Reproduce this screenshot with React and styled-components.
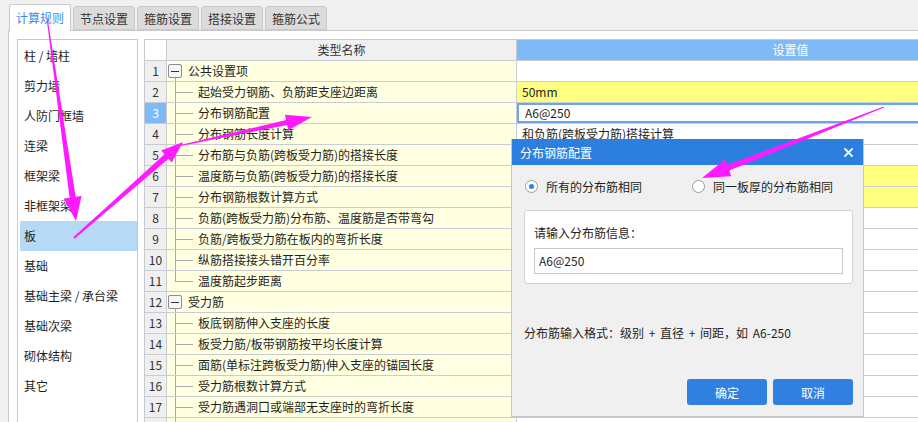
import React from 'react';
import styled, { createGlobalStyle } from 'styled-components';

const GlobalStyle = createGlobalStyle`
  html, body {
    margin: 0;
    padding: 0;
    background: #f0f0f0;
  }
  body {
    font-family: "Noto Sans CJK SC", "Microsoft YaHei", sans-serif;
    font-size: 12px;
    color: #1e1e1e;
  }
`;

const Page = styled.div`
  position: relative;
  width: 918px;
  height: 422px;
  overflow: hidden;
  background: #f0f0f0;
`;

const TabBar = styled.div`
  display: flex;
  align-items: flex-end;
  gap: 2px;
  height: 30px;
  padding-left: 9px;
`;

const Tab = styled.div`
  position: relative;
  z-index: 1;
  box-sizing: border-box;
  height: ${p => (p.$active ? '27px' : '24px')};
  margin-bottom: ${p => (p.$active ? '-1px' : '0')};
  padding: 0 6px;
  line-height: ${p => (p.$active ? '25px' : '23px')};
  border: 1px solid #cacaca;
  border-bottom: ${p => (p.$active ? 'none' : '1px solid #cacaca')};
  border-radius: 3px 3px 0 0;
  background: ${p => (p.$active ? '#fff' : '#dcdcdc')};
  color: ${p => (p.$active ? '#3b8de6' : '#333')};
  font-size: 12px;
  white-space: nowrap;
`;

const Panel = styled.div`
  display: flex;
  align-items: stretch;
  gap: 6px;
  height: 392px;
  margin-left: 8px;
  padding: 8px 0 0 8px;
  border-top: 1px solid #cacaca;
  border-left: 1px solid #cacaca;
  background: #fff;
`;

const SideList = styled.div`
  flex: none;
  box-sizing: border-box;
  width: 121px;
  padding-top: 1px;
  border: 1px solid #c8c8c8;
  background: #fff;
`;

const SideItem = styled.div`
  height: 30px;
  line-height: 30px;
  margin-left: 2px;
  padding-left: 4px;
  background: ${p => (p.$selected ? '#b6d9f5' : 'transparent')};
  color: #1e1e1e;
  white-space: nowrap;
`;

const Table = styled.div`
  flex: none;
  display: grid;
  grid-template-columns: 22px 350px 548px;
  grid-auto-rows: 21px;
  align-content: start;
  border-top: 1px solid #c6c9cf;
  border-left: 1px solid #c6c9cf;
`;

const Cell = styled.div`
  box-sizing: border-box;
  height: 21px;
  line-height: 20px;
  border-right: 1px solid #c9ccd2;
  border-bottom: 1px solid #c9ccd2;
  white-space: nowrap;
  overflow: hidden;
`;

const CornerCell = styled(Cell)`
  background: #fff;
`;

const HeadCell = styled(Cell)`
  text-align: center;
  background: ${p => (p.$accent ? '#7fbaf6' : '#f0f0f0')};
  color: ${p => (p.$accent ? '#fff' : '#333')};
`;

const NumCell = styled(Cell)`
  text-align: center;
  background: ${p => (p.$active ? '#7fbaf6' : '#efefef')};
  color: ${p => (p.$active ? '#fff' : '#333')};
`;

const NameCell = styled(Cell)`
  display: flex;
  align-items: stretch;
  background: #ffffe1;
`;

const ValueCell = styled(Cell)`
  padding-left: ${p => (p.$editing ? '8px' : '5px')};
  background: ${p => (p.$yellow ? '#ffff80' : '#fff')};
  box-shadow: ${p => (p.$editing ? 'inset 0 2px 0 #6aa6ea, inset 0 -2px 0 #6aa6ea, inset 2px 0 0 #6aa6ea' : 'none')};
`;

const Guide = styled.span`
  position: relative;
  flex: none;
  display: flex;
  align-items: center;
  width: ${p => (p.$group ? '21px' : '26px')};
  padding-left: ${p => (p.$group ? '1px' : '0')};
  box-sizing: border-box;

  &::before {
    content: '';
    position: absolute;
    left: 8px;
    top: ${p => (p.$group ? '17px' : '0')};
    bottom: ${p => (p.$last ? '10px' : '-1px')};
    border-left: 1px solid #a9a9a9;
  }

  &::after {
    content: '';
    display: ${p => (p.$group ? 'none' : 'block')};
    position: absolute;
    left: 8px;
    top: 10px;
    width: 18px;
    border-top: 1px solid #a9a9a9;
  }
`;

const Toggle = styled.span`
  box-sizing: border-box;
  width: 14px;
  height: 14px;
  display: flex;
  align-items: center;
  justify-content: center;
  border: 1px solid #8c8c8c;
  border-radius: 2px;
  background: #f7f7f7;

  &::after {
    content: '';
    width: 8px;
    height: 1px;
    background: #333;
  }
`;

const NameText = styled.span`
  padding-left: ${p => (p.$group ? '0' : '5px')};
`;

const Dialog = styled.div`
  position: absolute;
  left: 511px;
  top: 139px;
  z-index: 2;
  box-sizing: border-box;
  width: 353px;
  height: 278px;
  display: flex;
  flex-direction: column;
  border: 1px solid #c2c6cf;
  border-top: none;
  background: #f0f0f0;
`;

const TitleBar = styled.div`
  display: flex;
  align-items: center;
  justify-content: space-between;
  height: 26px;
  padding: 0 10px 0 8px;
  background: #2c7fdf;
  color: #fff;
`;

const DialogBody = styled.div`
  display: flex;
  flex-direction: column;
  padding: 0 10px 0 12px;
`;

const RadioRow = styled.div`
  display: flex;
  align-items: center;
  gap: 50px;
  height: 20px;
  margin-top: 11px;
  padding-left: 1px;
`;

const RadioOption = styled.label`
  display: flex;
  align-items: center;
  gap: 8px;
  white-space: nowrap;
`;

const Radio = styled.span`
  box-sizing: border-box;
  width: 13px;
  height: 13px;
  display: flex;
  align-items: center;
  justify-content: center;
  border: 1px solid #9b9b9b;
  border-radius: 50%;
  background: #fff;

  &::after {
    content: '';
    width: 5px;
    height: 5px;
    border-radius: 50%;
    background: ${p => (p.$checked ? '#2f80e0' : 'transparent')};
  }
`;

const GroupBox = styled.div`
  box-sizing: border-box;
  height: 74px;
  margin-top: 14px;
  padding: 13px 9px 0 9px;
  border: 1px solid #cfd2d8;
  border-radius: 3px;
  background: #fff;
`;

const FieldLabel = styled.div`
  line-height: 17px;
`;

const Field = styled.div`
  box-sizing: border-box;
  height: 26px;
  margin-top: 7px;
  padding-left: 4px;
  line-height: 24px;
  border: 1px solid #c8c8c8;
  background: #fff;
`;

const Hint = styled.div`
  margin-top: 40px;
  line-height: 17px;
  word-spacing: 2px;
  white-space: nowrap;
`;

const ButtonRow = styled.div`
  display: flex;
  justify-content: flex-end;
  gap: 6px;
  margin-top: 38px;
`;

const Button = styled.button`
  width: 80px;
  height: 26px;
  padding: 0;
  border: none;
  border-radius: 3px;
  background: #2f80e0;
  color: #fff;
  font-family: inherit;
  font-size: 12px;
`;

const Overlay = styled.svg`
  position: absolute;
  left: 0;
  top: 0;
  z-index: 3;
  pointer-events: none;
`;

const tabs = ['计算规则', '节点设置', '箍筋设置', '搭接设置', '箍筋公式'];

const sideItems = [
  '柱 / 墙柱', '剪力墙', '人防门框墙', '连梁', '框架梁', '非框架梁', '板',
  '基础', '基础主梁 / 承台梁', '基础次梁', '砌体结构', '其它',
];

// values for rows 5+ sit under the dialog, so they are left blank
const rows = [
  { label: '公共设置项', group: true },
  { label: '起始受力钢筋、负筋距支座边距离', value: '50mm', yellow: true },
  { label: '分布钢筋配置', value: 'A6@250', editing: true },
  { label: '分布钢筋长度计算', value: '和负筋(跨板受力筋)搭接计算' },
  { label: '分布筋与负筋(跨板受力筋)的搭接长度' },
  { label: '温度筋与负筋(跨板受力筋)的搭接长度', yellow: true },
  { label: '分布钢筋根数计算方式', yellow: true },
  { label: '负筋(跨板受力筋)分布筋、温度筋是否带弯勾' },
  { label: '负筋/跨板受力筋在板内的弯折长度' },
  { label: '纵筋搭接接头错开百分率' },
  { label: '温度筋起步距离', last: true },
  { label: '受力筋', group: true },
  { label: '板底钢筋伸入支座的长度' },
  { label: '板受力筋/板带钢筋按平均长度计算' },
  { label: '面筋(单标注跨板受力筋)伸入支座的锚固长度' },
  { label: '受力筋根数计算方式' },
  { label: '受力筋遇洞口或端部无支座时的弯折长度' },
  { label: '' },
];

function arrowPoints([x1, y1], [x2, y2], w1, w2, hl, hw) {
  const dx = x2 - x1;
  const dy = y2 - y1;
  const len = Math.hypot(dx, dy);
  const ux = dx / len;
  const uy = dy / len;
  const nx = -uy;
  const ny = ux;
  const bx = x2 - ux * hl;
  const by = y2 - uy * hl;
  const p = (x, y, k) => `${(x + nx * k).toFixed(1)},${(y + ny * k).toFixed(1)}`;
  return [
    p(x1, y1, w1 / 2), p(bx, by, w2 / 2), p(bx, by, hw / 2), `${x2},${y2}`,
    p(bx, by, -hw / 2), p(bx, by, -w2 / 2), p(x1, y1, -w1 / 2),
  ].join(' ');
}

const arrows = [
  [[47, 18], [76, 221], 1, 6, 24, 18],
  [[74, 238], [183, 142], 2, 6, 22, 16],
  [[178, 146], [312, 117], 1, 5, 26, 16],
  [[884, 107], [702, 178], 1, 6, 28, 18],
];

function CloseIcon() {
  return (
    <svg width="9" height="9" viewBox="0 0 9 9">
      <path d="M1 1 L8 8 M8 1 L1 8" stroke="#fff" strokeWidth="1.8" strokeLinecap="square" />
    </svg>
  );
}

function DistributionDialog() {
  return (
    <Dialog>
      <TitleBar>
        <span>分布钢筋配置</span>
        <CloseIcon />
      </TitleBar>
      <DialogBody>
        <RadioRow>
          <RadioOption>
            <Radio $checked />
            所有的分布筋相同
          </RadioOption>
          <RadioOption>
            <Radio />
            同一板厚的分布筋相同
          </RadioOption>
        </RadioRow>
        <GroupBox>
          <FieldLabel>请输入分布筋信息：</FieldLabel>
          <Field>A6@250</Field>
        </GroupBox>
        <Hint>分布筋输入格式：级别 + 直径 + 间距，如 A6-250</Hint>
        <ButtonRow>
          <Button>确定</Button>
          <Button>取消</Button>
        </ButtonRow>
      </DialogBody>
    </Dialog>
  );
}

export default function App() {
  return (
    <>
      <GlobalStyle />
      <Page>
        <TabBar>
          {tabs.map((t, i) => (
            <Tab key={t} $active={i === 0}>{t}</Tab>
          ))}
        </TabBar>
        <Panel>
          <SideList>
            {sideItems.map(item => (
              <SideItem key={item} $selected={item === '板'}>{item}</SideItem>
            ))}
          </SideList>
          <Table>
            <CornerCell />
            <HeadCell>类型名称</HeadCell>
            <HeadCell $accent>设置值</HeadCell>
            {rows.map((row, i) => (
              <React.Fragment key={i}>
                <NumCell $active={row.editing}>{i < 17 ? i + 1 : ''}</NumCell>
                <NameCell>
                  <Guide $group={row.group} $last={row.last}>
                    {row.group && <Toggle />}
                  </Guide>
                  <NameText $group={row.group}>{row.label}</NameText>
                </NameCell>
                <ValueCell $yellow={row.yellow} $editing={row.editing}>{row.value}</ValueCell>
              </React.Fragment>
            ))}
          </Table>
        </Panel>
        <DistributionDialog />
        <Overlay width="918" height="422" viewBox="0 0 918 422">
          {arrows.map((a, i) => (
            <polygon key={i} points={arrowPoints(...a)} fill="#ff1aff" />
          ))}
        </Overlay>
      </Page>
    </>
  );
}
